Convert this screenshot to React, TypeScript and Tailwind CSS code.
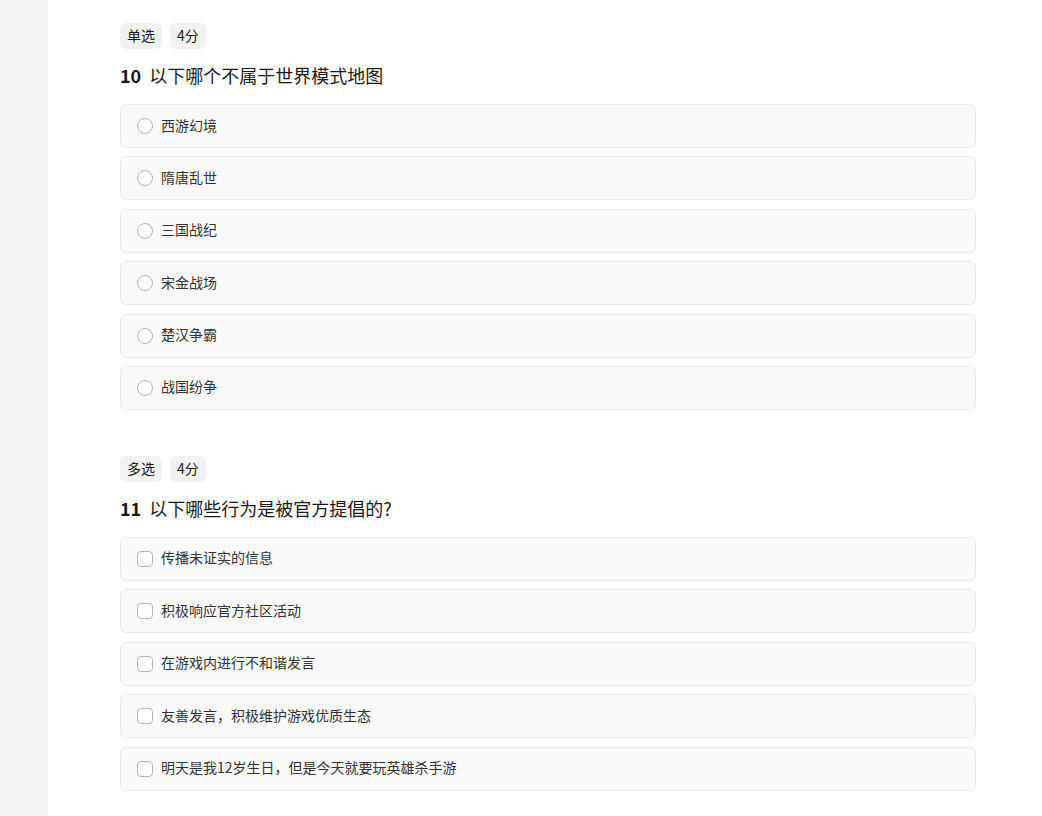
import React from "react";

const q1 = ["西游幻境", "隋唐乱世", "三国战纪", "宋金战场", "楚汉争霸", "战国纷争"];
const q2 = [
  "传播未证实的信息",
  "积极响应官方社区活动",
  "在游戏内进行不和谐发言",
  "友善发言，积极维护游戏优质生态",
  "明天是我12岁生日，但是今天就要玩英雄杀手游",
];

function Tag({ children }: { children: React.ReactNode }) {
  return (
    <span className="inline-flex h-[26px] items-center rounded-[6px] bg-[#f2f2f2] px-[7px] pb-[2px] text-[14px] leading-none text-[#1a1a1a]">
      {children}
    </span>
  );
}

function Question({
  type,
  num,
  title,
  options,
  multi,
}: {
  type: string;
  num: number;
  title: string;
  options: string[];
  multi?: boolean;
}) {
  return (
    <div>
      <div className="flex gap-2">
        <Tag>{type}</Tag>
        <Tag>4分</Tag>
      </div>
      <div className="mt-[13px] flex h-[26px] items-center text-[18px] leading-[26px] text-[#1a1a1a]">
        <span className="font-bold">{num}</span>
        <span className="ml-[8px]">{title}</span>
      </div>
      <div className="mt-[16px] flex flex-col gap-[8.4px]">
        {options.map((o) => (
          <div
            key={o}
            className="flex h-[44px] items-center rounded-[6px] border border-[#ebebeb] bg-[#fafafa] pl-[16px] text-[14px] text-[#333333]"
          >
            {multi ? (
              <span className="h-[16px] w-[16px] shrink-0 rounded-[4px] border border-[#b5b5b5] bg-white" />
            ) : (
              <span className="h-[16px] w-[16px] shrink-0 rounded-full border border-[#b5b5b5] bg-white" />
            )}
            <span className="ml-[8px] pb-[2px]">{o}</span>
          </div>
        ))}
      </div>
    </div>
  );
}

export default function App() {
  return (
    <div
      className="flex min-h-screen bg-white"
      style={{ fontFamily: '"Noto Sans CJK SC", "Noto Sans", sans-serif' }}
    >
      <div className="w-[48px] shrink-0 bg-[#f2f2f2]" />
      <div className="w-[928px] shrink-0 pl-[72px] pt-[23px] pb-[40px]">
        <div className="flex flex-col gap-[46px]">
          <Question type="单选" num={10} title="以下哪个不属于世界模式地图" options={q1} />
          <Question type="多选" num={11} title="以下哪些行为是被官方提倡的?" options={q2} multi />
        </div>
      </div>
    </div>
  );
}
